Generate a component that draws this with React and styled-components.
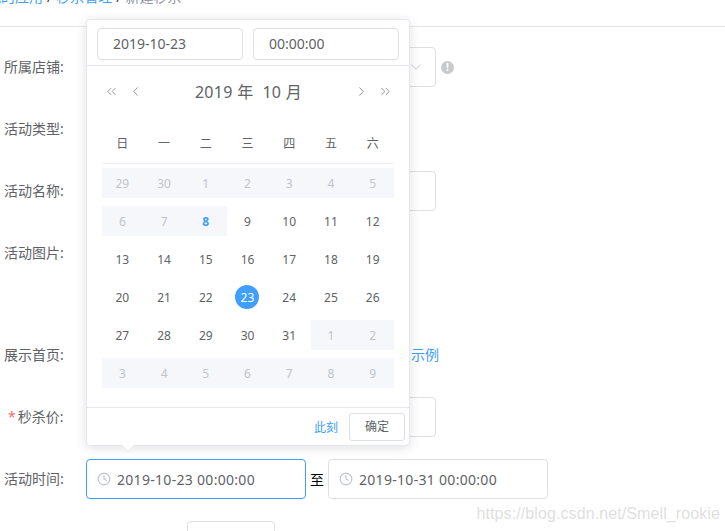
import React from "react";
import styled, { createGlobalStyle } from "styled-components";
import { ChevronLeft, ChevronRight, ChevronsLeft, ChevronsRight, ChevronDown, Clock } from "lucide-react";

const Global = createGlobalStyle`
  html, body { margin: 0; padding: 0; background: #fff; }
  body { width: 725px; height: 531px; overflow: hidden; font-family: "Noto Sans", "Noto Sans CJK SC", sans-serif; }
  * { box-sizing: border-box; }
`;

const Page = styled.div`
  position: relative;
  width: 725px;
  height: 531px;
  overflow: hidden;
  color: #606266;
  font-size: 14px;
`;

const Crumbs = styled.div`
  height: 40px;
  margin-top: -13px;
  margin-bottom: 20px;
  padding-left: 1px;
  line-height: 20px;
  white-space: nowrap;
  border-bottom: 1px solid #e4e7ed;
`;
const CrumbFirst = styled.span`
  color: #409eff;
  margin-left: -14px;
`;
const CrumbLink = styled.span`
  color: #409eff;
`;
const CrumbSep = styled.span`
  color: #303133;
  margin: 0 4px;
`;
const CrumbLast = styled.span`
  color: #909399;
`;

const Form = styled.div`
  display: flex;
  flex-direction: column;
  gap: 22px;
`;
const Row = styled.div`
  display: flex;
  flex: none;
  height: ${(p) => p.$h || 40}px;
`;
const Label = styled.div`
  width: 86px;
  padding-left: 4px;
  line-height: 40px;
  white-space: nowrap;
`;
const Star = styled.span`
  color: #f56c6c;
  margin: 0 2px 0 4px;
`;
const Control = styled.div`
  display: flex;
  align-items: center;
  gap: ${(p) => p.$gap || 5}px;
`;
const Box = styled.div`
  display: flex;
  align-items: center;
  width: ${(p) => p.$w}px;
  height: 40px;
  border: 1px solid ${(p) => (p.$active ? "#409eff" : "#dcdfe6")};
  border-radius: 4px;
  background: #fff;
  padding: 0 10px;
  color: #606266;
  letter-spacing: 0.3px;
  white-space: nowrap;
  justify-content: ${(p) => (p.$end ? "flex-end" : "flex-start")};
`;
const BoxIcon = styled(Clock)`
  width: 14px;
  height: 14px;
  color: #c0c4cc;
  margin-right: 6px;
  flex: none;
`;
const Arrow = styled(ChevronDown)`
  width: 18px;
  height: 18px;
  color: #c0c4cc;
  stroke-width: 1.2;
`;
const Hint = styled.span`
  display: inline-flex;
  align-items: center;
  justify-content: center;
  width: 13px;
  height: 13px;
  border-radius: 50%;
  background: #c8c9cc;
  color: #fff;
  font-size: 10px;
  font-weight: 700;
`;
const Sep = styled.span`
  color: #000;
`;
const DemoLink = styled.span`
  color: #409eff;
  margin-left: 325px;
  line-height: 40px;
  white-space: nowrap;
`;
const SubmitButton = styled.div`
  margin-left: 187px;
  width: 88px;
  height: 40px;
  border: 1px solid #dcdfe6;
  border-radius: 4px;
  background: #fff;
`;

const Popover = styled.div`
  position: absolute;
  left: 86px;
  top: 19px;
  width: 324px;
  height: 427px;
  background: #fff;
  border: 1px solid #e4e7ed;
  border-radius: 4px;
  box-shadow: 0 2px 12px 0 rgba(0, 0, 0, 0.12);
  display: flex;
  flex-direction: column;
  &::after {
    content: "";
    position: absolute;
    left: 35px;
    bottom: -6px;
    border-left: 6px solid transparent;
    border-right: 6px solid transparent;
    border-top: 6px solid #fff;
    filter: drop-shadow(0 1px 0 #e4e7ed);
  }
`;
const TimeHeader = styled.div`
  display: flex;
  gap: 10px;
  padding: 8px 10px 5px;
  height: 46px;
  border-bottom: 1px solid #e4e7ed;
`;
const TimeInput = styled.div`
  width: 146px;
  height: 32px;
  line-height: 30px;
  padding-left: 15px;
  border: 1px solid #dcdfe6;
  border-radius: 4px;
  font-size: 14px;
`;
const PanelHead = styled.div`
  display: flex;
  align-items: center;
  height: 26px;
  margin: 12px 16px 0 17px;
  color: #606266;
`;
const NavIcons = styled.div`
  display: flex;
  align-items: center;
  gap: 9px;
  color: #606266;
  svg { width: 15px; height: 15px; stroke-width: 1.1; }
`;
const Title = styled.div`
  flex: 1;
  text-align: center;
  font-size: 16px;
  letter-spacing: 0.3px;
  white-space: pre;
`;
const Table = styled.div`
  margin: 29px 15px 0;
  display: grid;
  grid-template-columns: repeat(7, 1fr);
  grid-template-rows: 31px repeat(6, 38px);
`;
const Weekday = styled.div`
  border-bottom: 1px solid #ebeef5;
  padding-right: 1px;
  font-size: 12px;
  line-height: 21px;
  text-align: center;
`;
const Cell = styled.div`
  height: 30px;
  margin-top: 4px;
  padding-right: 1px;
  display: flex;
  align-items: center;
  justify-content: center;
  font-size: 12px;
  background: ${(p) => (p.$off ? "#f5f7fa" : "transparent")};
  color: ${(p) => (p.$today ? "#409eff" : p.$off ? "#c0c4cc" : "#606266")};
  font-weight: ${(p) => (p.$today ? 700 : 400)};
`;
const Current = styled.span`
  display: flex;
  align-items: center;
  justify-content: center;
  width: 24px;
  height: 24px;
  border-radius: 50%;
  background: #409eff;
  color: #fff;
`;
const Footer = styled.div`
  margin-top: auto;
  height: 38px;
  border-top: 1px solid #e4e7ed;
  display: flex;
  align-items: center;
  justify-content: flex-end;
  padding: 1px 4px 0 0;
  font-size: 12px;
`;
const Now = styled.span`
  color: #409eff;
  margin-right: 11px;
`;
const Confirm = styled.div`
  width: 56px;
  height: 28px;
  border: 1px solid #dcdfe6;
  border-radius: 3px;
  text-align: center;
  line-height: 26px;
`;
const Watermark = styled.div`
  position: absolute;
  right: 5px;
  bottom: 8px;
  font-family: "Liberation Sans", sans-serif;
  font-size: 16px;
  color: rgba(190, 190, 190, 0.5);
  letter-spacing: 0.1px;
`;

const weekdays = ["日", "一", "二", "三", "四", "五", "六"];
const prev = [29, 30];
const days = [
  ...prev.map((d) => ({ d, off: true })),
  ...Array.from({ length: 31 }, (_, i) => ({ d: i + 1, off: i < 8, today: i === 7, cur: i === 22 })),
  ...Array.from({ length: 9 }, (_, i) => ({ d: i + 1, off: true })),
];

export default function App() {
  return (
    <Page>
      <Global />
      <Crumbs>
        <CrumbFirst>我的应用</CrumbFirst>
        <CrumbSep>/</CrumbSep>
        <CrumbLink>秒杀管理</CrumbLink>
        <CrumbSep>/</CrumbSep>
        <CrumbLast>新建秒杀</CrumbLast>
      </Crumbs>
      <Form>
        <Row>
          <Label>所属店铺:</Label>
          <Control>
            <Box $w={350} $end><Arrow /></Box>
            <Hint>!</Hint>
          </Control>
        </Row>
        <Row>
          <Label>活动类型:</Label>
        </Row>
        <Row>
          <Label>活动名称:</Label>
          <Control><Box $w={350} /></Control>
        </Row>
        <Row $h={80}>
          <Label>活动图片:</Label>
        </Row>
        <Row>
          <Label>展示首页:</Label>
          <DemoLink>示例</DemoLink>
        </Row>
        <Row>
          <Label><Star>*</Star>秒杀价:</Label>
          <Control><Box $w={350} /></Control>
        </Row>
        <Row>
          <Label>活动时间:</Label>
          <Control $gap={4}>
            <Box $w={220} $active><BoxIcon />2019-10-23 00:00:00</Box>
            <Sep>至</Sep>
            <Box $w={220}><BoxIcon />2019-10-31 00:00:00</Box>
          </Control>
        </Row>
        <Row>
          <SubmitButton />
        </Row>
      </Form>
      <Popover>
        <TimeHeader>
          <TimeInput>2019-10-23</TimeInput>
          <TimeInput>00:00:00</TimeInput>
        </TimeHeader>
        <PanelHead>
          <NavIcons><ChevronsLeft /><ChevronLeft /></NavIcons>
          <Title>2019 年  10 月</Title>
          <NavIcons><ChevronRight /><ChevronsRight /></NavIcons>
        </PanelHead>
        <Table>
          {weekdays.map((w) => <Weekday key={w}>{w}</Weekday>)}
          {days.map((c, i) => (
            <Cell key={i} $off={c.off} $today={c.today}>
              {c.cur ? <Current>{c.d}</Current> : c.d}
            </Cell>
          ))}
        </Table>
        <Footer>
          <Now>此刻</Now>
          <Confirm>确定</Confirm>
        </Footer>
      </Popover>
      <Watermark>https://blog.csdn.net/Smell_rookie</Watermark>
    </Page>
  );
}
